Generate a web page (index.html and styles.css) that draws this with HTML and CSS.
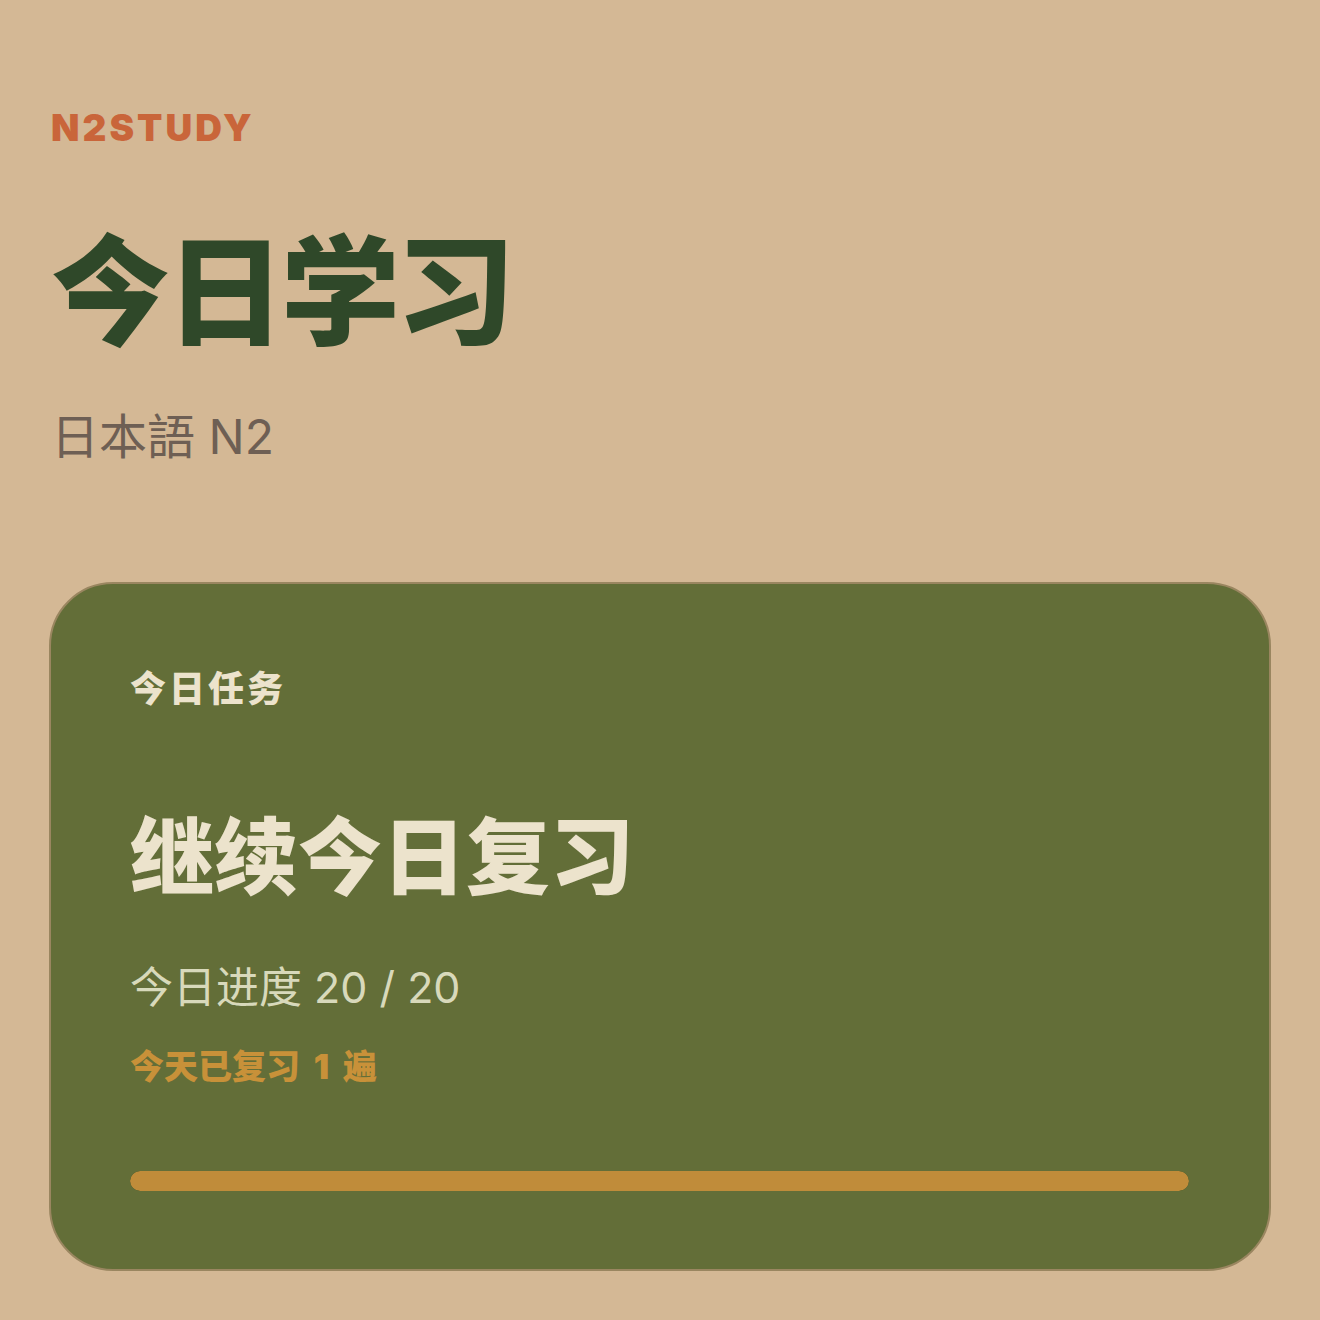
FILE: index.html
```html
<!DOCTYPE html>
<html lang="zh-CN">
<head>
<meta charset="utf-8">
<title>N2STUDY</title>
<link rel="stylesheet" href="styles.css">
</head>
<body>
<main class="page">
  <header class="head">
    <div class="brand">N2STUDY</div>
    <h1 class="title">今日学习</h1>
    <div class="subtitle">日本語 N2</div>
  </header>
  <section class="card">
    <div class="card-label">今日任务</div>
    <div class="card-title">继续今日复习</div>
    <div class="card-progress">今日进度 20 / 20</div>
    <div class="card-note">今天已复习 1 遍</div>
    <div class="bar"><div class="bar-fill" style="width:100%"></div></div>
  </section>
</main>
</body>
</html>
```
FILE: styles.css
```css
html, body {
  margin: 0;
  padding: 0;
  background: #d4b895;
}
body {
  width: 1320px;
  height: 1320px;
  font-family: "Noto Sans CJK SC", "Noto Sans", sans-serif;
}
.page {
  padding: 100px 49px 0 49px;
  display: flex;
  flex-direction: column;
}
.head {
  display: flex;
  flex-direction: column;
  padding-left: 2px;
}
.brand {
  font-family: "Inter", "Noto Sans", sans-serif;
  font-weight: 900;
  font-size: 37px;
  line-height: 56px;
  letter-spacing: 3px;
  color: #c9653a;
}
.title {
  margin: 58px 0 0 0;
  font-size: 119px;
  line-height: 140px;
  font-weight: 900;
  color: #2f4829;
  letter-spacing: -4px;
}
.subtitle {
  margin-top: 53px;
  font-family: "Inter", "Noto Sans CJK JP", sans-serif;
  font-size: 48px;
  line-height: 60px;
  color: #6e5f54;
  font-weight: 400;
}
.card {
  margin-top: 115px;
  height: 689px;
  box-sizing: border-box;
  border: 2px solid #9a8660;
  border-radius: 64px;
  background: #636e38;
  padding: 77px 80px 0 79px;
  display: flex;
  flex-direction: column;
}
.card-label {
  font-size: 36px;
  line-height: 50px;
  font-weight: 900;
  color: #ece3cc;
  letter-spacing: 3px;
}
.card-title {
  margin-top: 86px;
  font-size: 84px;
  line-height: 110px;
  font-weight: 900;
  color: #ece3cc;
}
.card-progress {
  margin-top: 50px;
  font-family: "Inter", "Noto Sans CJK SC", sans-serif;
  font-size: 43px;
  line-height: 60px;
  color: #d8d9bb;
}
.card-note {
  margin-top: 26px;
  font-family: "Inter", "Noto Sans CJK SC", sans-serif;
  font-size: 34px;
  line-height: 48px;
  font-weight: 900;
  color: #c89139;
  word-spacing: 7px;
}
.bar {
  margin-top: 80px;
  height: 20px;
  border-radius: 10px;
  background: #4f5a2c;
  overflow: hidden;
}
.bar-fill {
  height: 100%;
  border-radius: 10px;
  background: #c08c3a;
}
```
